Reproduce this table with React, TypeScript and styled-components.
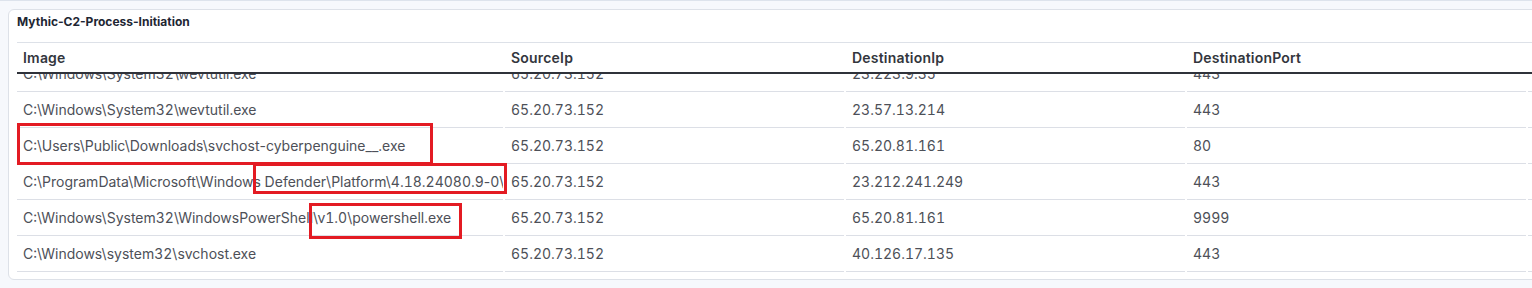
import React, { useLayoutEffect, useRef } from "react";
import styled, { createGlobalStyle } from "styled-components";

const GlobalStyle = createGlobalStyle`
  html, body { margin: 0; padding: 0; }
  body {
    background: #f6f8fc;
    font-family: Inter, "Noto Sans", "Liberation Sans", sans-serif;
    overflow: hidden;
    width: 1532px;
    height: 288px;
  }
`;

const Page = styled.div`
  position: relative;
  width: 1532px;
  height: 288px;
  overflow: hidden;
`;

const TopEdge = styled.div`
  height: 1px;
  background: #dde3ec;
`;

const Card = styled.section`
  margin: 8px 0 0 8px;
  width: 1560px;
  background: #ffffff;
  border: 1px solid #dde1e8;
  border-radius: 6px;
  padding: 0 8px 7px 8px;
  box-sizing: border-box;
`;

const Title = styled.h3`
  margin: 0;
  height: 32px;
  box-sizing: border-box;
  padding-top: 5px;
  line-height: 14px;
  font-size: 12px;
  font-weight: 700;
  color: #1e2633;
`;

const TableFrame = styled.div`
  border-top: 1px solid #dde1e8;
`;

const Columns = `
  display: grid;
  grid-template-columns: 486px 339px 339px 339px 1fr;
  column-gap: 2px;
`;

const HeaderRow = styled.div`
  ${Columns}
  height: 29px;
  border-bottom: 2px solid #2f323a;
`;

const HeaderCell = styled.div`
  padding-left: 6px;
  display: flex;
  align-items: center;
  font-size: 14px;
  font-weight: 600;
  letter-spacing: 0.2px;
  color: #33363d;
`;

const Body = styled.div`
  height: 198px;
  overflow: hidden;
`;

const Row = styled.div`
  ${Columns}
  height: 36px;
`;

const Cell = styled.div`
  padding-left: 6px;
  display: flex;
  align-items: center;
  border-bottom: 1px solid #dcdfe6;
  font-size: 14px;
  color: #4d5058;
  white-space: pre;
  overflow: hidden;
  font-feature-settings: "calt" 1, "kern" 1, "liga" 1, "tnum" 1;
`;

const Hyphen = styled.span`
  font-feature-settings: "calt" 1, "kern" 1, "liga" 1, "tnum" 0;
`;

const Mark = styled.div<{ $x: number; $y: number; $w: number; $h: number }>`
  position: absolute;
  left: ${(p) => p.$x}px;
  top: ${(p) => p.$y}px;
  width: ${(p) => p.$w}px;
  height: ${(p) => p.$h}px;
  border: 3px solid #e31b23;
  box-sizing: border-box;
  pointer-events: none;
`;

const headers = ["Image", "SourceIp", "DestinationIp", "DestinationPort", ""];

const rows: string[][] = [
  ["C:\\Windows\\System32\\wevtutil.exe", "65.20.73.152", "23.223.9.35", "443"],
  ["C:\\Windows\\System32\\wevtutil.exe", "65.20.73.152", "23.57.13.214", "443"],
  ["C:\\Users\\Public\\Downloads\\svchost-cyberpenguine__.exe", "65.20.73.152", "65.20.81.161", "80"],
  ["C:\\ProgramData\\Microsoft\\Windows Defender\\Platform\\4.18.24080.9-0\\MsMpEng.exe", "65.20.73.152", "23.212.241.249", "443"],
  ["C:\\Windows\\System32\\WindowsPowerShell\\v1.0\\powershell.exe", "65.20.73.152", "65.20.81.161", "9999"],
  ["C:\\Windows\\system32\\svchost.exe", "65.20.73.152", "40.126.17.135", "443"],
];

const marks = [
  { x: 17, y: 123, w: 416, h: 42 },
  { x: 253, y: 163, w: 254, h: 31 },
  { x: 309, y: 203, w: 153, h: 36 },
];

function renderText(text: string) {
  const parts = text.split("-");
  return parts.map((p, i) => (
    <React.Fragment key={i}>
      {i > 0 && <Hyphen>-</Hyphen>}
      {p}
    </React.Fragment>
  ));
}

export default function App() {
  const bodyRef = useRef<HTMLDivElement>(null);
  useLayoutEffect(() => {
    if (bodyRef.current) bodyRef.current.scrollTop = 18;
  }, []);

  return (
    <>
      <GlobalStyle />
      <Page>
        <TopEdge />
        <Card>
          <Title>Mythic-C2-Process-Initiation</Title>
          <TableFrame>
            <HeaderRow>
              {headers.map((h, i) => (
                <HeaderCell key={i}>{h}</HeaderCell>
              ))}
            </HeaderRow>
            <Body ref={bodyRef}>
              {rows.map((r, i) => (
                <Row key={i}>
                  {r.map((c, j) => (
                    <Cell key={j}>{renderText(c)}</Cell>
                  ))}
                  <Cell />
                </Row>
              ))}
            </Body>
          </TableFrame>
        </Card>
        {marks.map((m, i) => (
          <Mark key={i} $x={m.x} $y={m.y} $w={m.w} $h={m.h} />
        ))}
      </Page>
    </>
  );
}
